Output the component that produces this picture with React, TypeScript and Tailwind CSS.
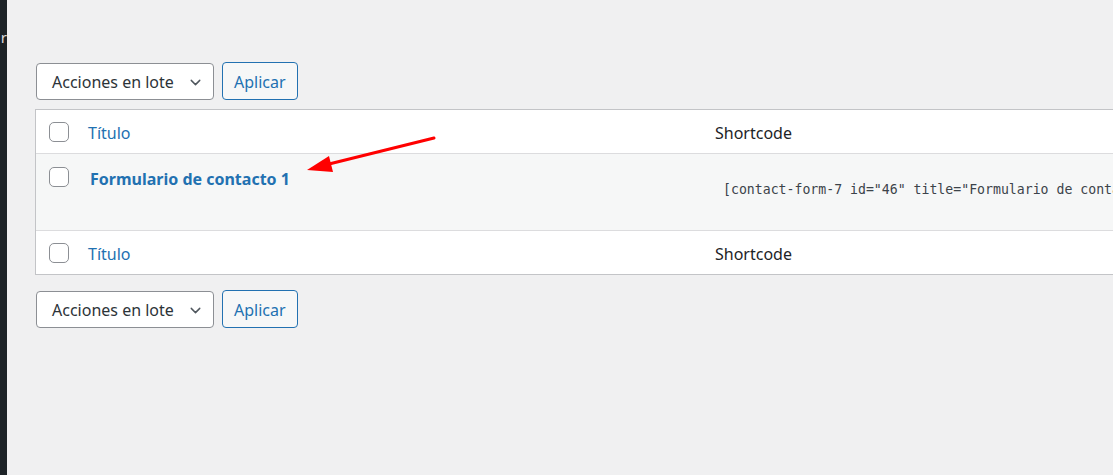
import { ChevronDown } from "lucide-react";

function BulkActions() {
  return (
    <div className="flex items-center gap-2">
      <div className="ml-px flex h-[37px] w-[178px] items-center justify-between rounded-[4px] border border-[#8c8f94] bg-white pl-[15px] pr-[9px] pt-[2px] text-[16px] text-[#2c3338]">
        <span>Acciones en lote</span>
        <ChevronDown size={17} strokeWidth={2} className="text-[#50575e]" />
      </div>
      <button
        type="button"
        className="h-[38px] rounded-[4px] border border-[#2271b1] bg-[#f6f7f7] px-[11px] pt-[1px] text-[16px] text-[#2271b1]"
      >
        Aplicar
      </button>
    </div>
  );
}

function Checkbox() {
  return <span className="block h-[20px] w-[20px] rounded-[5px] border border-[#8c8f94] bg-white" />;
}

function HeaderRow({ top }: { top?: boolean }) {
  return (
    <div
      className={`flex h-[44px] items-center bg-white ${
        top ? "border-b border-[#dcdcde]" : "border-t border-[#dcdcde]"
      }`}
    >
      <div className="w-[52px] pl-[13px]">
        <Checkbox />
      </div>
      <div className="w-[627px] pt-[2px] text-[16px] text-[#2271b1]">Título</div>
      <div className="pt-[2px] text-[16px] text-[#1d2327]">Shortcode</div>
    </div>
  );
}

export default function App() {
  return (
    <div
      className="flex h-[475px] w-full overflow-hidden bg-[#f0f0f1]"
      style={{ fontFamily: '"Noto Sans", "Open Sans", sans-serif' }}
    >
      <div className="flex w-[7px] shrink-0 justify-end overflow-hidden bg-[#1d2327] pt-[27px]">
        <span className="text-[15px] leading-[20px] text-[#dcdcde]">r</span>
      </div>
      <div className="relative flex-1 pl-[28px] pt-[62px]">
        <BulkActions />
        <div className="mt-[9px] w-[1200px] border border-[#c3c4c7] bg-white">
          <HeaderRow top />
          <div className="flex h-[76px] items-start bg-[#f6f7f7]">
            <div className="w-[52px] pl-[13px] pt-[13px]">
              <Checkbox />
            </div>
            <div className="w-[627px] pl-[2px] pt-[13px] text-[16px] font-bold text-[#2271b1]">
              Formulario de contacto 1
            </div>
            <div
              className="pl-[8px] pt-[26px] text-[13.2px] whitespace-nowrap text-[#3c434a]"
              style={{ fontFamily: '"DejaVu Sans Mono", "Liberation Mono", monospace' }}
            >
              [contact-form-7 id="46" title="Formulario de contacto 1"]
            </div>
          </div>
          <HeaderRow />
        </div>
        <div className="mt-[15px]">
          <BulkActions />
        </div>
        <svg
          className="pointer-events-none absolute left-[264px] top-[130px]"
          width="170"
          height="50"
          viewBox="0 0 170 50"
        >
          <line x1="163" y1="8" x2="50" y2="36" stroke="#f00" strokeWidth="3" strokeLinecap="round" />
          <polygon points="36,40 58,26 62,42" fill="#f00" />
        </svg>
      </div>
    </div>
  );
}
